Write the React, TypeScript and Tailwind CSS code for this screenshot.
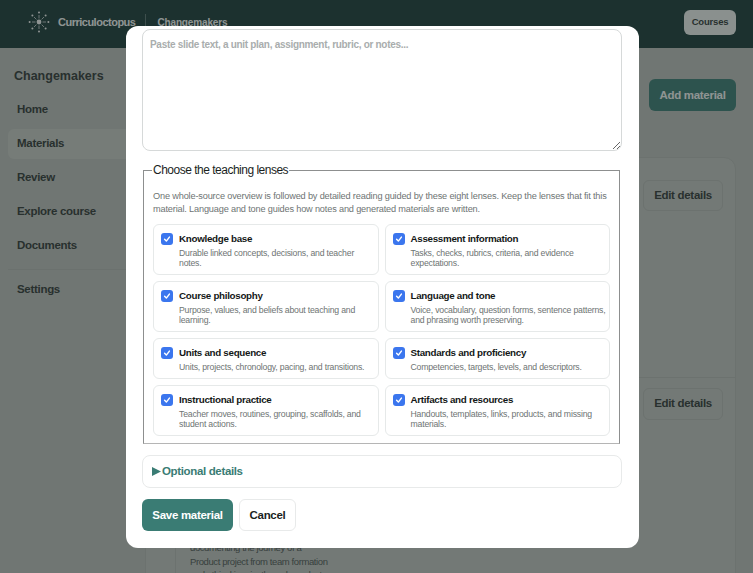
const navItems = ['Home', 'Materials', 'Review', 'Explore course', 'Documents'];

const lenses = [
  { title: 'Knowledge base', body: 'Durable linked concepts, decisions, and teacher\nnotes.', h: 'h-[51px]' },
  { title: 'Assessment information', body: 'Tasks, checks, rubrics, criteria, and evidence\nexpectations.', h: 'h-[51px]' },
  { title: 'Course philosophy', body: 'Purpose, values, and beliefs about teaching and\nlearning.', h: 'h-[51px]' },
  { title: 'Language and tone', body: 'Voice, vocabulary, question forms, sentence patterns,\nand phrasing worth preserving.', h: 'h-[51px]' },
  { title: 'Units and sequence', body: 'Units, projects, chronology, pacing, and transitions.', h: 'h-[41px]' },
  { title: 'Standards and proficiency', body: 'Competencies, targets, levels, and descriptors.', h: 'h-[41px]' },
  { title: 'Instructional practice', body: 'Teacher moves, routines, grouping, scaffolds, and\nstudent actions.', h: 'h-[51px]' },
  { title: 'Artifacts and resources', body: 'Handouts, templates, links, products, and missing\nmaterials.', h: 'h-[51px]' },
];

const Logo = () => (
  <svg width="24" height="24" viewBox="0 0 24 24" fill="none" stroke="white" strokeWidth="0.7">
    <circle cx="12" cy="12" r="2.4" fill="white" stroke="none" />
    <path d="M12 8.5V5M12 15.5V19M8.5 12H5M15.5 12H19M9.4 9.4 7 7M14.6 14.6 17 17M14.6 9.4 17 7M9.4 14.6 7 17" />
    <g fill="white" stroke="none">
      <circle cx="12" cy="2.6" r="1" />
      <circle cx="12" cy="21.4" r="1" />
      <circle cx="2.6" cy="12" r="1" />
      <circle cx="21.4" cy="12" r="1" />
      <circle cx="5.4" cy="5.4" r="1" />
      <circle cx="18.6" cy="18.6" r="1" />
      <circle cx="18.6" cy="5.4" r="1" />
      <circle cx="5.4" cy="18.6" r="1" />
    </g>
  </svg>
);

const Check = () => (
  <span className="mt-px flex size-[12px] shrink-0 items-center justify-center rounded-[3px] bg-[#3b76ee]">
    <svg width="8" height="8" viewBox="0 0 10 10" fill="none" stroke="white" strokeWidth="1.8" strokeLinecap="round" strokeLinejoin="round">
      <path d="M2 5.4 4.2 7.6 8 2.6" />
    </svg>
  </span>
);

export default function App() {
  return (
    <div className="relative h-[573px] w-[753px] overflow-hidden bg-[#c0c2be] font-['Liberation_Sans',sans-serif]">
      {/* Page behind the dialog */}
      <header className="flex h-12 items-center justify-between bg-[#183836] pb-[4px] pl-[27px] pr-[17px]">
        <div className="flex items-center">
          <Logo />
          <span className="ml-[7px] pt-px text-[11px] font-bold tracking-[-0.5px] text-white">Curriculoctopus</span>
          <span className="ml-[10px] h-4 w-px bg-white/30" />
          <span className="ml-[11px] pt-px text-[10px] font-bold tracking-[-0.15px] text-white">Changemakers</span>
        </div>
        <button className="h-[25px] w-[52px] rounded-md bg-[#f4f6f5] text-[9.5px] font-bold tracking-[-0.2px] text-[#303634]">Courses</button>
      </header>

      <div className="flex">
        <aside className="w-[145px] shrink-0 pl-2 pt-[20px]">
          <h2 className="pl-[6px] text-[12.5px] font-bold leading-[16px] text-[#303634]">Changemakers</h2>
          <nav className="mt-[11px] flex flex-col gap-1">
            {navItems.map((item) => (
              <a
                key={item}
                className={`flex h-[30px] items-center rounded-l-md pl-[9px] text-[11.5px] font-bold tracking-[-0.3px] text-[#303634] ${item === 'Materials' ? 'bg-[#cccec9]' : ''}`}
              >
                {item}
              </a>
            ))}
          </nav>
          <div className="mt-2 h-px bg-[#b6b8b4]" />
          <a className="mt-[3px] flex h-[30px] items-center pl-[9px] pt-[4px] text-[11.5px] font-bold tracking-[-0.3px] text-[#303634]">Settings</a>
        </aside>

        <main className="flex-1">
          <div className="flex justify-end pr-[17px] pt-[31px]">
            <button className="h-[32px] w-[87px] rounded-md bg-[#3a7c74] pt-px text-[11.5px] font-bold tracking-[-0.3px] text-white">Add material</button>
          </div>
          <section className="mt-[46px] h-[420px] w-[591px] rounded-t-xl border border-[#b8bab6] bg-[#c6c8c4]">
            <div className="flex h-[220px] justify-end border-b border-[#b8bab6] pr-3 pt-[22px]">
              <button className="h-[31px] w-[80px] rounded-md border border-[#b8bab6] text-[11.5px] font-bold tracking-[-0.3px] text-[#303634]">Edit details</button>
            </div>
            <div className="flex h-[200px]">
              <div className="w-[30px] border-r border-[#b8bab6]" />
              <p className="mt-[163px] w-[170px] shrink-0 whitespace-nowrap pl-[14px] text-[9.5px] leading-[13.5px] tracking-[-0.4px] text-[#505654]">
                documenting the journey of a
                <br />
                Product project from team formation
                <br />
                and ethical inquiry through product
              </p>
              <div className="flex flex-1 justify-end pr-3 pt-[10px]">
                <button className="h-[32px] w-[80px] rounded-md border border-[#b8bab6] text-[11.5px] font-bold tracking-[-0.3px] text-[#303634]">Edit details</button>
              </div>
            </div>
          </section>
        </main>
      </div>

      {/* Dialog */}
      <div className="absolute inset-0 bg-[#1f2a28]/50 pl-[126px] pt-[26px]">
        <div className="h-[522px] w-[513px] rounded-xl bg-white px-4 pt-[3px]">
          <textarea
            placeholder="Paste slide text, a unit plan, assignment, rubric, or notes..."
            className="block h-[122px] w-[480px] rounded-lg border border-[#d6d9d9] px-[7px] py-[8px] text-[10px] font-bold leading-[13px] tracking-[-0.3px] outline-none placeholder:text-[#a9adad]"
          />

          <fieldset className="ml-px mt-[12px] h-[281px] w-[477px] border border-[#8d8f8f] border-b-[#b5b5b5] px-[9px]">
            <legend className="-ml-px px-[1px] text-[12px] leading-[15px] tracking-[-0.5px] text-[#1b1f1e]">Choose the teaching lenses</legend>
            <p className="mt-[12px] text-[9.2px] leading-[13px] tracking-[-0.17px] text-[#6e7473]">
              One whole-source overview is followed by detailed reading guided by these eight lenses. Keep the lenses that fit this material. Language and tone guides how notes and generated materials are written.
            </p>
            <div className="mt-[8px] grid grid-cols-2 gap-[6px]">
              {lenses.map((lens) => (
                <label key={lens.title} className={`flex gap-[6px] rounded-md border border-[#e6e9e9] pl-[7px] pr-[4px] pt-[7px] ${lens.h}`}>
                  <Check />
                  <span className="block">
                    <span className="block text-[9.8px] font-bold leading-[14px] tracking-[-0.3px] text-[#141817]">{lens.title}</span>
                    <span className="mt-[2px] block whitespace-pre text-[8.7px] leading-[10px] tracking-[-0.2px] text-[#6e7473]">{lens.body}</span>
                  </span>
                </label>
              ))}
            </div>
          </fieldset>

          <div className="mt-[11px] flex h-[33px] w-[480px] items-center rounded-lg border border-[#e8eaea] pl-[9px]">
            <svg width="9" height="9" viewBox="0 0 8 8" className="mb-px" fill="#3a7c74">
              <path d="M0 0 8 4 0 8Z" />
            </svg>
            <span className="ml-[1px] pt-px text-[11.5px] font-bold tracking-[-0.35px] text-[#3a7c74]">Optional details</span>
          </div>

          <div className="mt-[11px] flex gap-[6px]">
            <button className="h-[32px] w-[91px] rounded-md bg-[#3a7c74] pt-[2px] text-[11.5px] font-bold tracking-[-0.3px] text-white">Save material</button>
            <button className="h-[32px] w-[57px] rounded-md border border-[#e8eaea] pt-[2px] text-[11.5px] font-bold tracking-[-0.3px] text-[#1b1f1e]">Cancel</button>
          </div>
        </div>
      </div>
    </div>
  );
}
